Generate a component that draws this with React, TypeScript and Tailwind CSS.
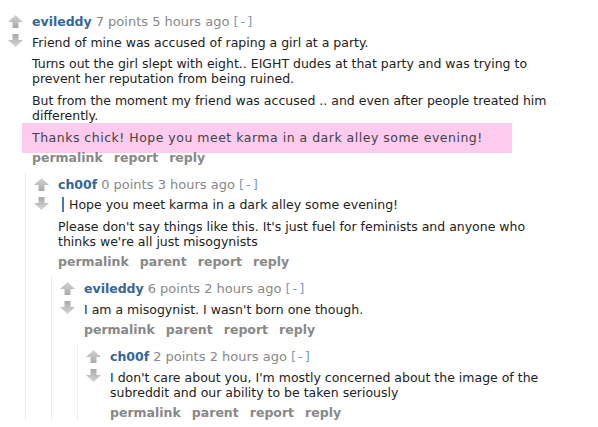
import React from "react";

interface CommentData {
  author: string;
  points: number;
  time: string;
  body: React.ReactNode;
  buttons: string[];
  replies?: CommentData[];
}

function Arrow({ down }: { down?: boolean }) {
  return (
    <svg width="15" height="13" viewBox="0 0 15 13" className={down ? "rotate-180" : ""}>
      <defs>
        <linearGradient id="arrowgrad" x1="0" y1="0" x2="0" y2="1">
          <stop offset="0" stopColor="#d4d4d4" />
          <stop offset="1" stopColor="#a9a9a9" />
        </linearGradient>
      </defs>
      <path d="M7.5 0 L15 7 L10.5 7 L10.5 13 L4.5 13 L4.5 7 L0 7 Z" fill="url(#arrowgrad)" />
    </svg>
  );
}

function Comment({ data, first }: { data: CommentData; first?: boolean }) {
  return (
    <div className={first ? "pt-[14px]" : "pt-[4px]"}>
      <div className="flex">
        <div className="ml-[8px] mr-[9px] mt-[1px] flex w-[15px] flex-col gap-[6px]">
          <Arrow />
          <Arrow down />
        </div>
        <div className="flex-1">
          <div className="leading-[15px]">
            <span className="font-bold text-[#336699]">{data.author}</span>{" "}
            <span className="text-[13px] text-[#888]">
              {data.points} points {data.time}
            </span>{" "}
            <span className="text-[13px] tracking-[2px] text-[#7a9cc4]">[-]</span>
          </div>
          <div className="mt-[5.5px] flex flex-col gap-[6.5px] leading-[15px] text-[#222]">{data.body}</div>
          <div className="mt-[5.5px] flex gap-[11px] font-bold leading-[15px] text-[#888]">
            {data.buttons.map((b) => (
              <span key={b}>{b}</span>
            ))}
          </div>
        </div>
      </div>
      {data.replies?.map((r, i) => (
        <div key={i} className="ml-[25px] mt-[8px] border-l border-dotted border-[#d6d9e6]">
          <Comment data={r} />
        </div>
      ))}
    </div>
  );
}

const thread: CommentData = {
  author: "evileddy",
  points: 7,
  time: "5 hours ago",
  buttons: ["permalink", "report", "reply"],
  body: (
    <>
      <p>Friend of mine was accused of raping a girl at a party.</p>
      <p>
        Turns out the girl slept with eight.. EIGHT dudes at that party and was trying to prevent her reputation
        from being ruined.
      </p>
      <div>
        <p>But from the moment my friend was accused .. and even after people treated him differently.</p>
        <p className="-mb-[8.5px] -ml-[10px] flex h-[30px] w-[490px] items-center bg-[#fccbee] pl-[10px] tracking-[0.5px] text-[#444]">
          Thanks chick! Hope you meet karma in a dark alley some evening!
        </p>
      </div>
    </>
  ),
  replies: [
    {
      author: "ch00f",
      points: 0,
      time: "3 hours ago",
      buttons: ["permalink", "parent", "report", "reply"],
      body: (
        <>
          <blockquote className="ml-[4px] border-l-2 border-[#4a78ad] pl-[5px] leading-[15px]">
            Hope you meet karma in a dark alley some evening!
          </blockquote>
          <p>
            Please don't say things like this. It's just fuel for feminists and anyone who thinks we're all just
            misogynists
          </p>
        </>
      ),
      replies: [
        {
          author: "evileddy",
          points: 6,
          time: "2 hours ago",
          buttons: ["permalink", "parent", "report", "reply"],
          body: <p>I am a misogynist. I wasn't born one though.</p>,
          replies: [
            {
              author: "ch00f",
              points: 2,
              time: "2 hours ago",
              buttons: ["permalink", "parent", "report", "reply"],
              body: (
                <p>
                  I don't care about you, I'm mostly concerned about the image of the subreddit and our ability to
                  be taken seriously
                </p>
              ),
            },
          ],
        },
      ],
    },
  ],
};

export default function App() {
  return (
    <div className="h-[427px] w-[598px] overflow-hidden bg-white pr-[40px] font-['DejaVu_Sans',Verdana,sans-serif] text-[12.5px]">
      <Comment data={thread} first />
    </div>
  );
}
